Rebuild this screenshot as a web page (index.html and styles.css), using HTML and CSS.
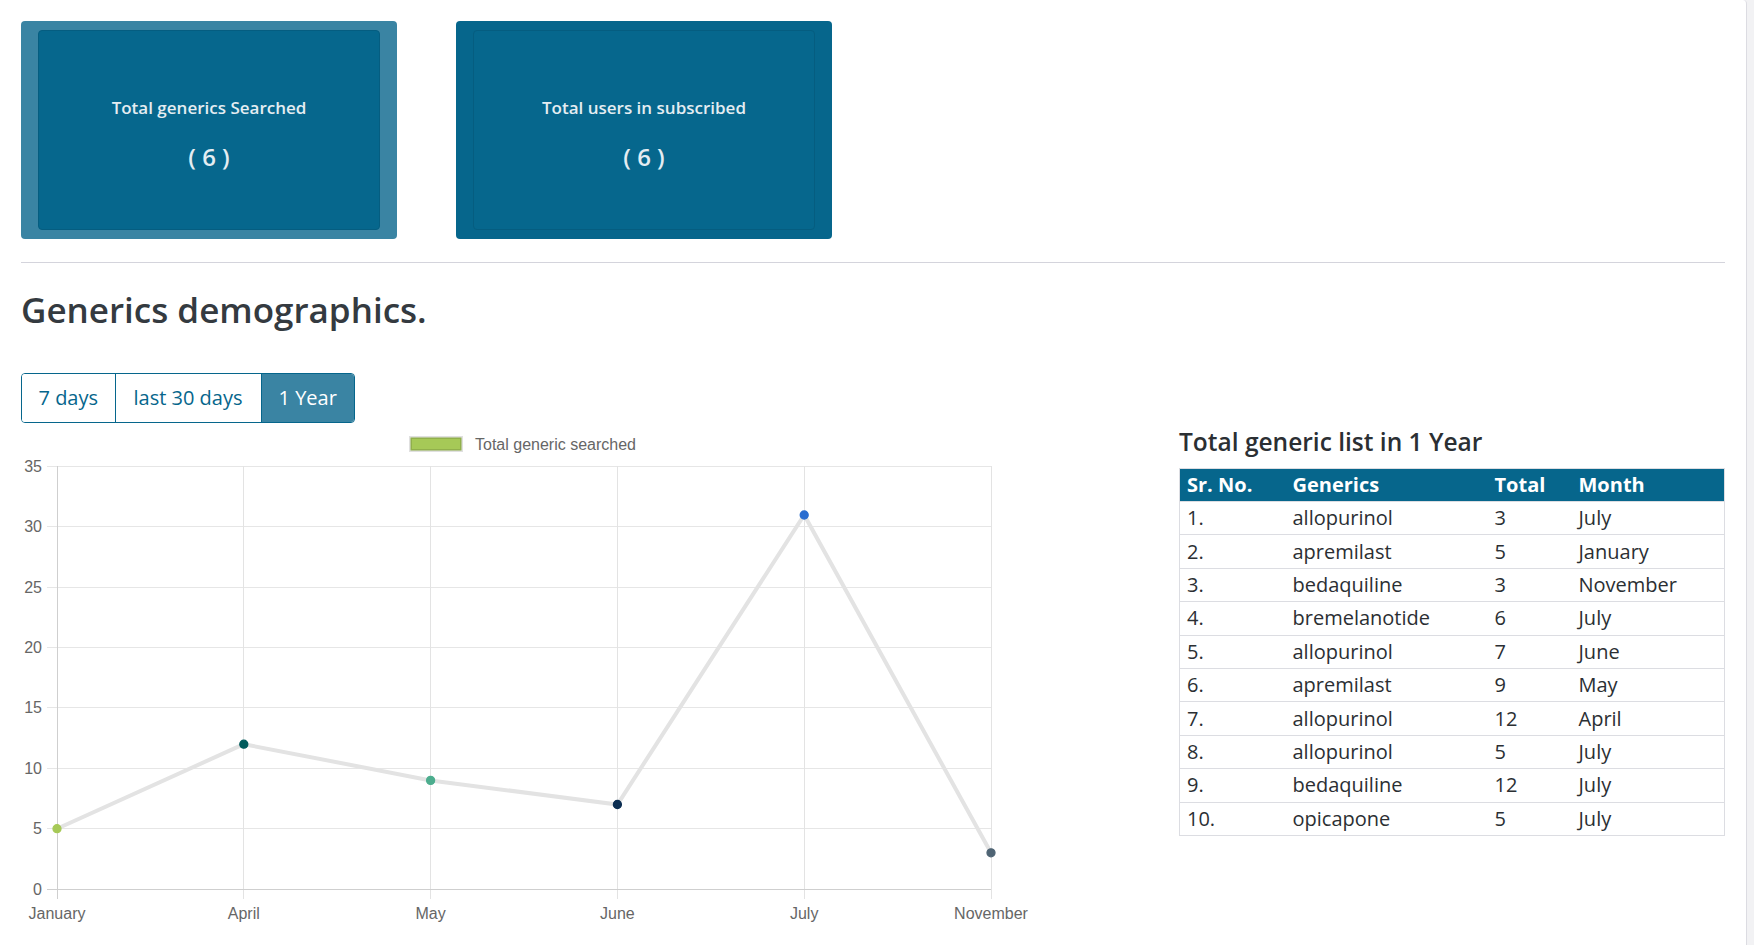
FILE: index.html
```html
<!DOCTYPE html>
<html lang="en">
<head>
<meta charset="utf-8">
<title>Generics dashboard</title>
<link rel="stylesheet" href="styles.css">
</head>
<body>
<div class="page">
  <main class="panel">
    <section class="stats">
      <div class="stat stat-active">
        <div class="stat-inner">
          <p class="stat-label">Total generics Searched</p>
          <p class="stat-value">( 6 )</p>
        </div>
      </div>
      <div class="stat">
        <div class="stat-inner">
          <p class="stat-label">Total users in subscribed</p>
          <p class="stat-value">( 6 )</p>
        </div>
      </div>
    </section>

    <hr class="divider">

    <h2 class="title">Generics demographics.</h2>

    <div class="range-group">
      <button class="range-btn">7 days</button>
      <button class="range-btn range-btn-wide">last 30 days</button>
      <button class="range-btn range-btn-active">1 Year</button>
    </div>

    <div class="analytics">
      <div class="chart-col">
        <svg class="chart" width="1060" height="512" viewBox="0 0 1060 512" xmlns="http://www.w3.org/2000/svg">
          <!-- legend -->
          <rect x="389.5" y="11.5" width="51" height="13" fill="#a6c957" stroke="rgba(0,0,0,0.12)" stroke-width="3"/>
          <text x="454" y="23.5" class="chart-text">Total generic searched</text>

          <!-- horizontal grid -->
          <g stroke="#e6e6e6" stroke-width="1" shape-rendering="crispEdges">
            <line x1="26" y1="40.5" x2="970" y2="40.5"/>
            <line x1="26" y1="100.5" x2="970" y2="100.5"/>
            <line x1="26" y1="161.5" x2="970" y2="161.5"/>
            <line x1="26" y1="221.5" x2="970" y2="221.5"/>
            <line x1="26" y1="281.5" x2="970" y2="281.5"/>
            <line x1="26" y1="342.5" x2="970" y2="342.5"/>
            <line x1="26" y1="402.5" x2="970" y2="402.5"/>
          </g>
          <!-- vertical grid -->
          <g stroke="#e3e3e3" stroke-width="1" shape-rendering="crispEdges">
            <line x1="222.5" y1="40" x2="222.5" y2="473"/>
            <line x1="409.5" y1="40" x2="409.5" y2="473"/>
            <line x1="596.5" y1="40" x2="596.5" y2="473"/>
            <line x1="783.5" y1="40" x2="783.5" y2="473"/>
            <line x1="970.5" y1="40" x2="970.5" y2="473"/>
          </g>
          <!-- axes -->
          <g stroke="#cfcfcf" stroke-width="1" shape-rendering="crispEdges">
            <line x1="26" y1="463.5" x2="970" y2="463.5"/>
            <line x1="36.5" y1="40" x2="36.5" y2="473"/>
          </g>

          <!-- y labels -->
          <g class="chart-text" text-anchor="end">
            <text x="21" y="46">35</text>
            <text x="21" y="106">30</text>
            <text x="21" y="167">25</text>
            <text x="21" y="227">20</text>
            <text x="21" y="287">15</text>
            <text x="21" y="348">10</text>
            <text x="21" y="408">5</text>
            <text x="21" y="469">0</text>
          </g>

          <!-- x labels -->
          <g class="chart-text" text-anchor="middle">
            <text x="36" y="493">January</text>
            <text x="222.8" y="493">April</text>
            <text x="409.6" y="493">May</text>
            <text x="596.4" y="493">June</text>
            <text x="783.2" y="493">July</text>
            <text x="970" y="493">November</text>
          </g>

          <!-- line -->
          <polyline points="36,402.7 222.8,318.2 409.6,354.4 596.4,378.5 783.2,89 970,426.8" fill="none" stroke="#e3e3e3" stroke-width="4" stroke-linejoin="miter"/>

          <!-- points -->
          <g stroke-width="1.3">
            <circle cx="36" cy="402.7" r="4" fill="#a6c957" stroke="#a6c957"/>
            <circle cx="222.8" cy="318.2" r="4" fill="#005b5c" stroke="#005b5c"/>
            <circle cx="409.6" cy="354.4" r="4" fill="#4cad8e" stroke="#4cad8e"/>
            <circle cx="596.4" cy="378.5" r="4" fill="#0c2e52" stroke="#0c2e52"/>
            <circle cx="783.2" cy="89" r="4" fill="#2a6dd0" stroke="#2a6dd0"/>
            <circle cx="970" cy="426.8" r="4" fill="#4f6474" stroke="#4f6474"/>
          </g>
        </svg>
      </div>

      <div class="table-col">
        <h3 class="table-title">Total generic list in 1 Year</h3>
        <table class="generic-table">
          <colgroup>
            <col class="c-no"><col class="c-gen"><col class="c-total"><col class="c-month">
          </colgroup>
          <thead>
            <tr><th>Sr. No.</th><th>Generics</th><th>Total</th><th>Month</th></tr>
          </thead>
          <tbody>
            <tr><td>1.</td><td>allopurinol</td><td>3</td><td>July</td></tr>
            <tr><td>2.</td><td>apremilast</td><td>5</td><td>January</td></tr>
            <tr><td>3.</td><td>bedaquiline</td><td>3</td><td>November</td></tr>
            <tr><td>4.</td><td>bremelanotide</td><td>6</td><td>July</td></tr>
            <tr><td>5.</td><td>allopurinol</td><td>7</td><td>June</td></tr>
            <tr><td>6.</td><td>apremilast</td><td>9</td><td>May</td></tr>
            <tr><td>7.</td><td>allopurinol</td><td>12</td><td>April</td></tr>
            <tr><td>8.</td><td>allopurinol</td><td>5</td><td>July</td></tr>
            <tr><td>9.</td><td>bedaquiline</td><td>12</td><td>July</td></tr>
            <tr><td>10.</td><td>opicapone</td><td>5</td><td>July</td></tr>
          </tbody>
        </table>
      </div>
    </div>
  </main>
</div>
</body>
</html>
```

FILE: styles.css
```css
* { box-sizing: border-box; }

html, body {
  margin: 0;
  padding: 0;
  height: 100%;
}

body {
  font-family: "Open Sans", "Noto Sans", sans-serif;
  color: #2b2f33;
  background: #f2f2f4;
  overflow: hidden;
}

.page {
  height: 945px;
  background: #f2f2f4;
}

.panel {
  width: 1747px;
  height: 945px;
  background: #ffffff;
  border-right: 1px solid #dcdce2;
  border-top-right-radius: 4px;
  padding: 21px 21px 0 21px;
  overflow: hidden;
}

/* stat cards */
.stats {
  display: flex;
  gap: 59px;
}

.stat {
  width: 376px;
  height: 218px;
  padding: 9px 17px;
  background: #06668c;
  border-radius: 4px;
}

.stat-active {
  background: #3a84a3;
}

.stat-inner {
  height: 100%;
  background: #06678d;
  border: 1px solid #055d80;
  border-radius: 4px;
  display: flex;
  flex-direction: column;
  align-items: center;
  justify-content: center;
  gap: 21px;
  padding-top: 8px;
  color: #e4edf2;
}

.stat-label {
  margin: 0;
  font-size: 17px;
  font-weight: 600;
  line-height: 24px;
}

.stat-value {
  margin: 0;
  font-size: 24px;
  font-weight: 600;
  line-height: 32px;
}

.divider {
  margin: 23px 0 0 0;
  border: 0;
  border-top: 1px solid #d4d4dc;
  height: 0;
}

.title {
  margin: 26px 0 0 0;
  font-size: 35px;
  font-weight: 600;
  line-height: 42px;
  color: #343a40;
}

/* range buttons */
.range-group {
  display: inline-flex;
  margin-top: 42px;
  border: 1px solid #06668c;
  border-radius: 4px;
  overflow: hidden;
}

.range-btn {
  font-family: "Open Sans", "Noto Sans", sans-serif;
  font-size: 20px;
  line-height: 30px;
  padding: 9px 16.5px;
  margin: 0;
  border: 0;
  border-right: 1px solid #06668c;
  background: #ffffff;
  color: #06668c;
}

.range-btn-wide {
  padding: 9px 18px;
}

.range-btn:last-child {
  border-right: 0;
  padding: 9px 17px;
}

.range-btn-active {
  background: #3a84a3;
  color: #ffffff;
}

/* analytics row */
.analytics {
  display: grid;
  grid-template-columns: 1136px 1fr;
  margin-top: 2px;
}

.chart-col {
  padding-top: 1px;
}

.chart {
  display: block;
  overflow: visible;
}

.chart-text {
  font-family: "Liberation Sans", Arial, sans-serif;
  font-size: 16px;
  fill: #666666;
}

.table-col {
  padding-left: 22px;
}

.table-title {
  margin: 0 0 11px 0;
  padding-top: 1px;
  font-size: 24.5px;
  font-weight: 600;
  line-height: 31px;
  color: #2b2f33;
}

.generic-table {
  width: 100%;
  border-collapse: collapse;
  border: 1px solid #dcdde2;
  font-size: 20px;
  table-layout: fixed;
}

.c-no { width: 106px; }
.c-gen { width: 202px; }
.c-total { width: 84px; }
.c-month { width: auto; }

.generic-table th {
  background: #06668c;
  color: #ffffff;
  font-weight: 700;
  text-align: left;
  padding: 0 7px;
  height: 33px;
  line-height: 32px;
}

.generic-table td {
  padding: 0 7px;
  height: 33.4px;
  line-height: 32px;
  border-top: 1px solid #dcdde2;
  color: #2b2f33;
  white-space: nowrap;
}
```
